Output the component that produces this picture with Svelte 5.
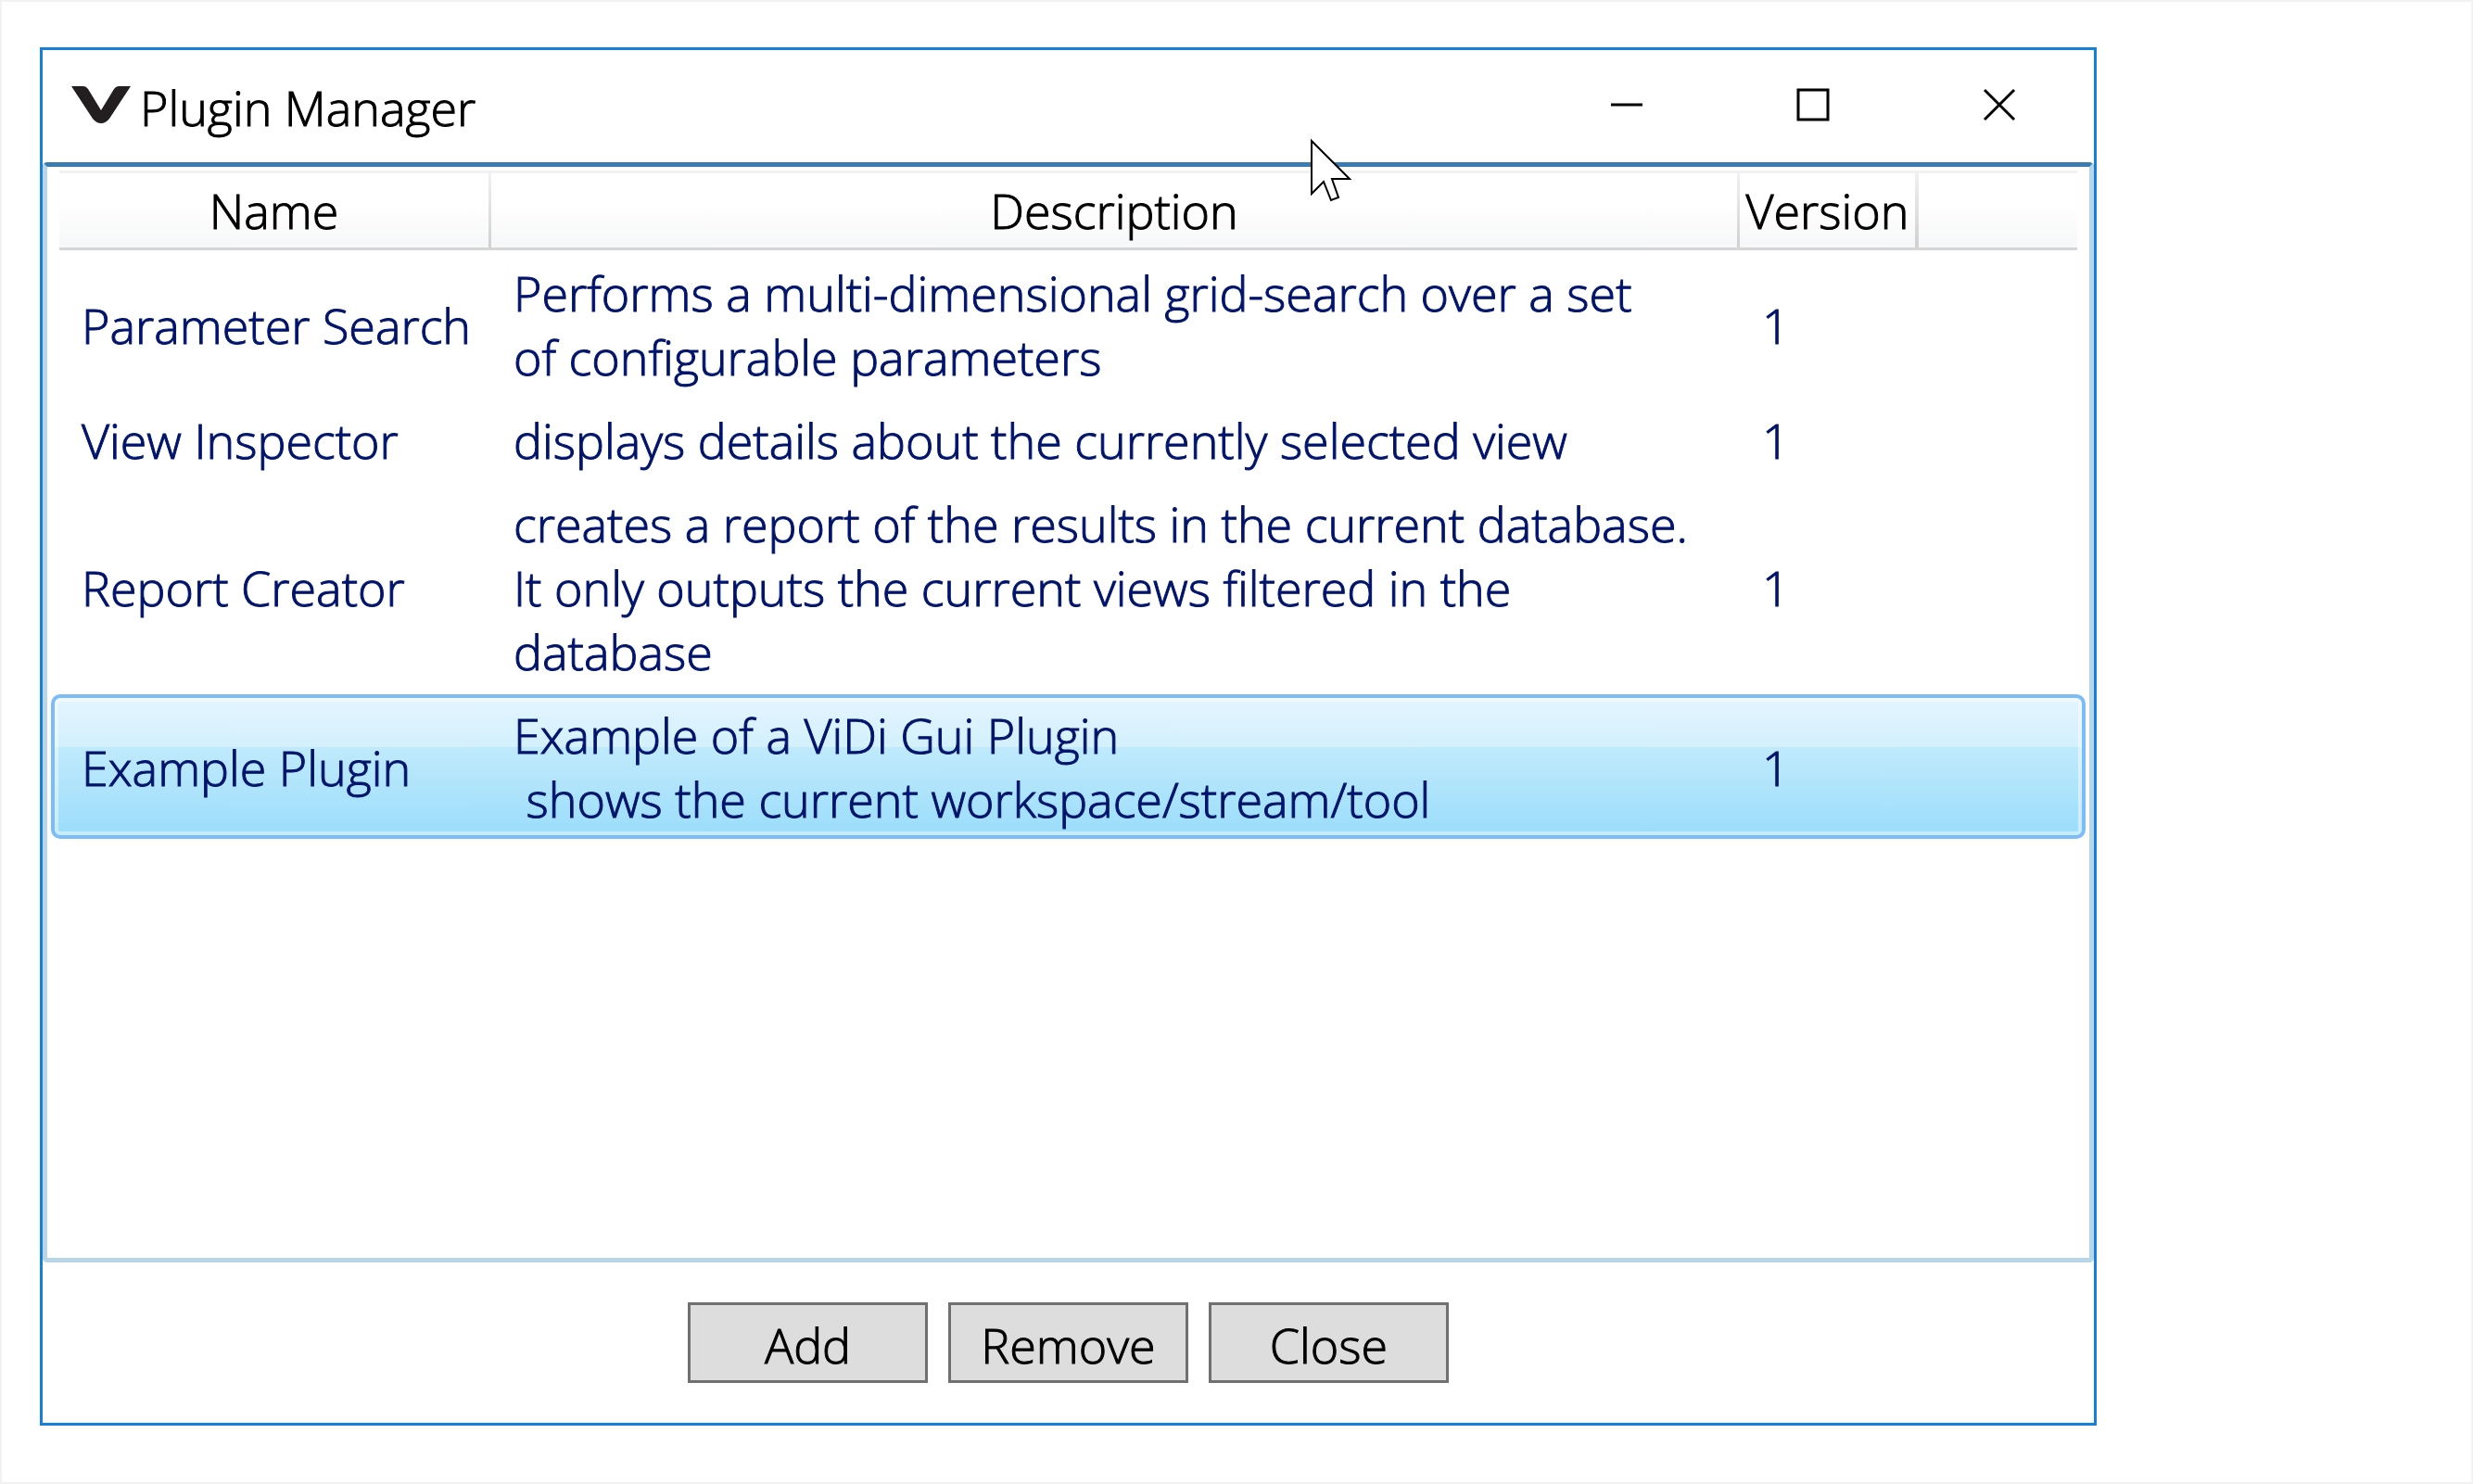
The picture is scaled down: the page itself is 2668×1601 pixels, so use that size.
<script>
  const plugins = [
    {
      name: 'Parameter Search',
      description: 'Performs a multi-dimensional grid-search over a set\nof configurable parameters',
      version: '1'
    },
    {
      name: 'View Inspector',
      description: 'displays details about the currently selected view',
      version: '1'
    },
    {
      name: 'Report Creator',
      description:
        'creates a report of the results in the current database.\nIt only outputs the current views filtered in the\ndatabase',
      version: '1'
    },
    {
      name: 'Example Plugin',
      description: 'Example of a ViDi Gui Plugin\n shows the current workspace/stream/tool',
      version: '1'
    }
  ];

  let selected = $state('Example Plugin');
</script>

<div class="desktop">
  <main class="window">
    <header class="titlebar">
      <svg class="logo" viewBox="0 0 64 40" aria-hidden="true">
        <path d="M0 0H13Q16 0 18 3L32 26L46 3Q48 0 51 0H64L41 35Q37 40 32 40Q27 40 23 35Z" fill="#231f20" />
      </svg>
      <h1>Plugin Manager</h1>
      <div class="controls">
        <button type="button" aria-label="Minimize">
          <svg viewBox="0 0 36 36"><path d="M1 18H35" /></svg>
        </button>
        <button type="button" aria-label="Maximize">
          <svg viewBox="0 0 36 36"><rect x="2" y="2" width="32" height="32" /></svg>
        </button>
        <button type="button" aria-label="Close window">
          <svg viewBox="0 0 36 36"><path d="M2 2L34 34M34 2L2 34" /></svg>
        </button>
      </div>
    </header>

    <section class="list">
      <table>
        <thead>
          <tr>
            <th scope="col">Name</th>
            <th scope="col">Description</th>
            <th scope="col" class="last">Version</th>
            <td></td>
          </tr>
        </thead>
        <tbody>
          {#each plugins as plugin (plugin.name)}
            <tr
              class:selected={plugin.name === selected}
              aria-selected={plugin.name === selected}
              onclick={() => (selected = plugin.name)}
            >
              <td>{plugin.name}</td>
              <td>{plugin.description}</td>
              <td>{plugin.version}</td>
              <td></td>
            </tr>
          {/each}
        </tbody>
      </table>
    </section>

    <footer class="actions">
      <button type="button">Add</button>
      <button type="button">Remove</button>
      <button type="button">Close</button>
    </footer>
  </main>

  <svg class="cursor" viewBox="-1 -3 48 72" aria-hidden="true">
    <path d="M1 1V58L14 45L22 65L30 62L23 42H42Z" />
  </svg>
</div>

<style>
  :global(body) {
    background: #fff;
  }

  .desktop {
    box-sizing: border-box;
    position: relative;
    display: flex;
    min-height: 100vh;
    padding: 49px 404px 61px 41px;
    border: 2px solid #f2f2f2;
    color: #000;
    font: 300 52px/69px 'Open Sans', 'Noto Sans', sans-serif;
    -webkit-text-stroke: 1px currentcolor;
  }

  .window {
    box-sizing: border-box;
    display: flex;
    flex: 1;
    flex-direction: column;
    border: 3px solid #1580d8;
    background: #fff;
  }

  .titlebar {
    box-sizing: border-box;
    display: flex;
    align-items: center;
    height: 121px;
    padding: 0 2px 3px 31px;
  }

  .logo {
    width: 64px;
    height: 40px;
  }

  h1 {
    flex: 1;
    margin: 0;
    padding: 5px 0 0 10px;
    font: inherit;
  }

  .controls {
    display: flex;
    align-self: stretch;
  }

  .controls button {
    display: grid;
    place-items: center;
    width: 201px;
    padding: 0;
    border: 0;
    background: none;
  }

  .controls svg {
    width: 36px;
    height: 36px;
    fill: none;
    stroke: #000;
    stroke-width: 3;
  }

  .list {
    flex: 1;
    padding: 4px 4px 0;
    border: 5px solid #b8d6e8;
    border-top-color: #3a7bb0;
    border-radius: 5px;
  }

  table,
  thead,
  tbody {
    display: block;
  }

  tr {
    display: grid;
    grid-template-columns: 466px minmax(0, 1fr) 193px 171px;
  }

  thead tr {
    margin: 0 9px;
    border-top: 3px solid #f1f1f1;
    border-bottom: 3px solid #d5d5d5;
    background: linear-gradient(#fff 40%, #f6f7f8);
  }

  th {
    padding: 5px 0 6px;
    border-right: 3px solid;
    border-image: linear-gradient(#f1f1f1, #d0d0d0) 1;
    font-weight: inherit;
    text-align: center;
    white-space: nowrap;
  }

  th.last {
    border-right-width: 4px;
  }

  tbody {
    display: grid;
    gap: 3px;
    padding-top: 2px;
  }

  tbody tr {
    align-items: center;
    padding: 5px;
    border: 4px solid transparent;
    border-radius: 10px;
    color: #00146b;
  }

  tbody td {
    padding: 0 0 0 24px;
    white-space: pre-wrap;
  }

  tbody .selected {
    border-color: #7cbcf8;
    background: linear-gradient(#e3f5ff, #d3f0fd 36%, #c0eafc 36%, #9bddfb) padding-box;
    box-shadow: inset 0 0 0 4px rgb(255 255 255 / 45%);
  }

  .actions {
    display: flex;
    justify-content: center;
    gap: 22px;
    padding: 43px 0;
  }

  .actions button {
    width: 259px;
    height: 87px;
    padding: 3px 0 0;
    border: 3px solid #707070;
    background: #ddd;
    color: inherit;
    font: inherit;
  }

  .cursor {
    position: absolute;
    top: 146px;
    left: 1411px;
    width: 48px;
    height: 72px;
    fill: #fff;
    stroke: #000;
    stroke-width: 2;
  }
</style>
